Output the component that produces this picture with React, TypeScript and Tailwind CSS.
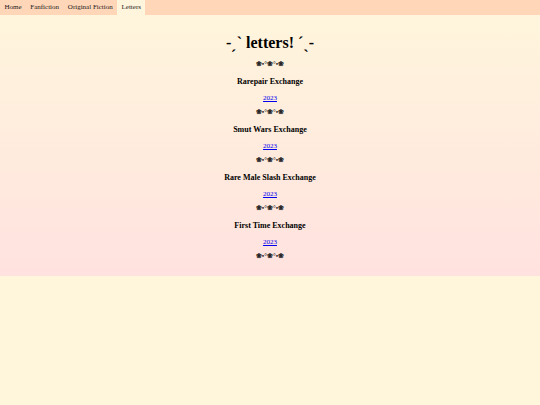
const exchanges = [
  "Rarepair Exchange",
  "Smut Wars Exchange",
  "Rare Male Slash Exchange",
  "First Time Exchange",
];

function Divider() {
  return (
    <div className="h-[14px] flex items-center justify-center text-[7px] font-bold text-[#222] leading-none pt-[2px]">
      ❀•°❀°•❀
    </div>
  );
}

export default function App() {
  const tabs = ["Home", "Fanfiction", "Original Fiction", "Letters"];
  return (
    <div className="min-h-[405px] bg-[#fff6dc] text-black" style={{ fontFamily: '"Liberation Serif", "Times New Roman", serif' }}>
      <nav className="h-[15px] bg-[#ffd6b8] flex">
        {tabs.map((t) => (
          <a
            key={t}
            className={
              "h-full flex items-center px-[4.4px] text-[7px] text-[#1a1a1a] " +
              (t === "Letters" ? "bg-[#fff5dc]" : "")
            }
          >
            {t}
          </a>
        ))}
      </nav>
      <main className="bg-gradient-to-b from-[#fff5dc] to-[#ffe2df] pt-[15px] pb-[14px] flex flex-col items-center">
        <h1 className="h-[26px] flex items-center text-[16px] font-bold leading-none">-ˏˋ letters! ˊˎ-</h1>
        <Divider />
        {exchanges.map((e) => (
          <div key={e} className="flex flex-col items-center">
            <h3 className="h-[20px] flex items-center text-[8px] font-bold leading-none pt-[3px]">{e}</h3>
            <div className="h-[14px] flex items-center text-[7px] leading-none pt-[2px]">
              <a href="#" className="text-[#0000ee] underline">2023</a>
            </div>
            <Divider />
          </div>
        ))}
      </main>
    </div>
  );
}
